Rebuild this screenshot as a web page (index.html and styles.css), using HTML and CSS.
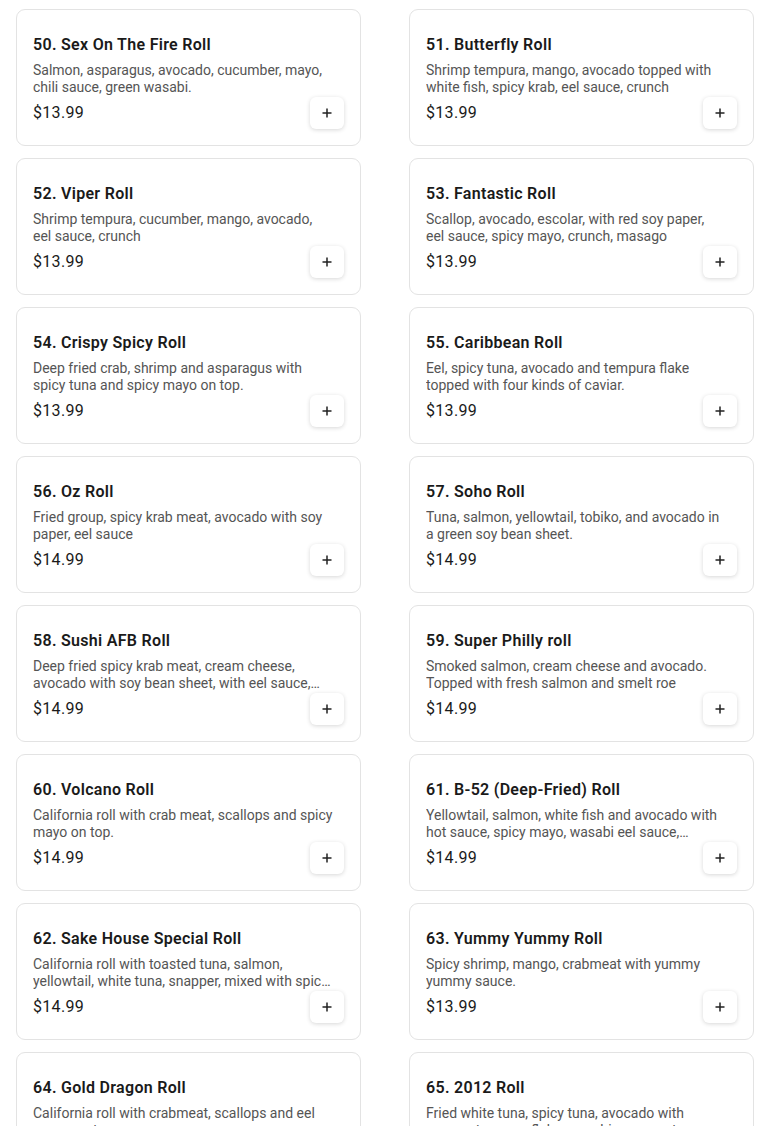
FILE: index.html
```html
<!DOCTYPE html>
<html>
<head>
<meta charset="utf-8">
<link rel="stylesheet" href="styles.css">
</head>
<body>
<div class="grid">
  <div class="card"><h3 class="title">50. Sex On The Fire Roll</h3><p class="desc">Salmon, asparagus, avocado, cucumber, mayo, chili sauce, green wasabi.</p><div class="row"><span class="price">$13.99</span><button class="add"><svg viewBox="0 0 12 12" width="12" height="12"><path d="M6 1.5v9M1.5 6h9" stroke="#222" stroke-width="1.5"/></svg></button></div></div>
  <div class="card"><h3 class="title">51. Butterfly Roll</h3><p class="desc">Shrimp tempura, mango, avocado topped with white fish, spicy krab, eel sauce, crunch</p><div class="row"><span class="price">$13.99</span><button class="add"><svg viewBox="0 0 12 12" width="12" height="12"><path d="M6 1.5v9M1.5 6h9" stroke="#222" stroke-width="1.5"/></svg></button></div></div>
  <div class="card"><h3 class="title">52. Viper Roll</h3><p class="desc">Shrimp tempura, cucumber, mango, avocado, eel sauce, crunch</p><div class="row"><span class="price">$13.99</span><button class="add"><svg viewBox="0 0 12 12" width="12" height="12"><path d="M6 1.5v9M1.5 6h9" stroke="#222" stroke-width="1.5"/></svg></button></div></div>
  <div class="card"><h3 class="title">53. Fantastic Roll</h3><p class="desc">Scallop, avocado, escolar, with red soy paper, eel sauce, spicy mayo, crunch, masago</p><div class="row"><span class="price">$13.99</span><button class="add"><svg viewBox="0 0 12 12" width="12" height="12"><path d="M6 1.5v9M1.5 6h9" stroke="#222" stroke-width="1.5"/></svg></button></div></div>
  <div class="card"><h3 class="title">54. Crispy Spicy Roll</h3><p class="desc">Deep fried crab, shrimp and asparagus with spicy tuna and spicy mayo on top.</p><div class="row"><span class="price">$13.99</span><button class="add"><svg viewBox="0 0 12 12" width="12" height="12"><path d="M6 1.5v9M1.5 6h9" stroke="#222" stroke-width="1.5"/></svg></button></div></div>
  <div class="card"><h3 class="title">55. Caribbean Roll</h3><p class="desc">Eel, spicy tuna, avocado and tempura flake topped with four kinds of caviar.</p><div class="row"><span class="price">$13.99</span><button class="add"><svg viewBox="0 0 12 12" width="12" height="12"><path d="M6 1.5v9M1.5 6h9" stroke="#222" stroke-width="1.5"/></svg></button></div></div>
  <div class="card"><h3 class="title">56. Oz Roll</h3><p class="desc">Fried group, spicy krab meat, avocado with soy paper, eel sauce</p><div class="row"><span class="price">$14.99</span><button class="add"><svg viewBox="0 0 12 12" width="12" height="12"><path d="M6 1.5v9M1.5 6h9" stroke="#222" stroke-width="1.5"/></svg></button></div></div>
  <div class="card"><h3 class="title">57. Soho Roll</h3><p class="desc">Tuna, salmon, yellowtail, tobiko, and avocado in a green soy bean sheet.</p><div class="row"><span class="price">$14.99</span><button class="add"><svg viewBox="0 0 12 12" width="12" height="12"><path d="M6 1.5v9M1.5 6h9" stroke="#222" stroke-width="1.5"/></svg></button></div></div>
  <div class="card"><h3 class="title">58. Sushi AFB Roll</h3><p class="desc">Deep fried spicy krab meat, cream cheese, avocado with soy bean sheet, with eel sauce, spicy mayo and crunch on top.</p><div class="row"><span class="price">$14.99</span><button class="add"><svg viewBox="0 0 12 12" width="12" height="12"><path d="M6 1.5v9M1.5 6h9" stroke="#222" stroke-width="1.5"/></svg></button></div></div>
  <div class="card"><h3 class="title">59. Super Philly roll</h3><p class="desc">Smoked salmon, cream cheese and avocado. Topped with fresh salmon and smelt roe</p><div class="row"><span class="price">$14.99</span><button class="add"><svg viewBox="0 0 12 12" width="12" height="12"><path d="M6 1.5v9M1.5 6h9" stroke="#222" stroke-width="1.5"/></svg></button></div></div>
  <div class="card"><h3 class="title">60. Volcano Roll</h3><p class="desc">California roll with crab meat, scallops and spicy mayo on top.</p><div class="row"><span class="price">$14.99</span><button class="add"><svg viewBox="0 0 12 12" width="12" height="12"><path d="M6 1.5v9M1.5 6h9" stroke="#222" stroke-width="1.5"/></svg></button></div></div>
  <div class="card"><h3 class="title">61. B-52 (Deep-Fried) Roll</h3><p class="desc">Yellowtail, salmon, white fish and avocado with hot sauce, spicy mayo, wasabi eel sauce, scallions and masago.</p><div class="row"><span class="price">$14.99</span><button class="add"><svg viewBox="0 0 12 12" width="12" height="12"><path d="M6 1.5v9M1.5 6h9" stroke="#222" stroke-width="1.5"/></svg></button></div></div>
  <div class="card"><h3 class="title">62. Sake House Special Roll</h3><p class="desc">California roll with toasted tuna, salmon, yellowtail, white tuna, snapper, mixed with spicy sauce on top.</p><div class="row"><span class="price">$14.99</span><button class="add"><svg viewBox="0 0 12 12" width="12" height="12"><path d="M6 1.5v9M1.5 6h9" stroke="#222" stroke-width="1.5"/></svg></button></div></div>
  <div class="card"><h3 class="title">63. Yummy Yummy Roll</h3><p class="desc">Spicy shrimp, mango, crabmeat with yummy yummy sauce.</p><div class="row"><span class="price">$13.99</span><button class="add"><svg viewBox="0 0 12 12" width="12" height="12"><path d="M6 1.5v9M1.5 6h9" stroke="#222" stroke-width="1.5"/></svg></button></div></div>
  <div class="card"><h3 class="title">64. Gold Dragon Roll</h3><p class="desc">California roll with crabmeat, scallops and eel sauce on top.</p><div class="row"><span class="price">$14.99</span><button class="add"><svg viewBox="0 0 12 12" width="12" height="12"><path d="M6 1.5v9M1.5 6h9" stroke="#222" stroke-width="1.5"/></svg></button></div></div>
  <div class="card"><h3 class="title">65. 2012 Roll</h3><p class="desc">Fried white tuna, spicy tuna, avocado with mango, tempura flake, wasabi mayo on top.</p><div class="row"><span class="price">$14.99</span><button class="add"><svg viewBox="0 0 12 12" width="12" height="12"><path d="M6 1.5v9M1.5 6h9" stroke="#222" stroke-width="1.5"/></svg></button></div></div>
</div>
</body>
</html>
```
FILE: styles.css
```css
html, body { margin: 0; padding: 0; background: #fff; }
body { font-family: Roboto, "Noto Sans", sans-serif; color: #1f1f1f; }
.grid {
  display: grid;
  grid-template-columns: 345px 345px;
  column-gap: 48px;
  row-gap: 12px;
  padding: 9px 16px;
}
.card {
  box-sizing: border-box;
  height: 137px;
  border: 1px solid #e3e3e3;
  border-radius: 9px;
  padding: 16px;
  display: flex;
  flex-direction: column;
  justify-content: flex-end;
}
.title {
  margin: 0;
  font-size: 16px;
  font-weight: 600;
  line-height: 20px;
  letter-spacing: 0.3px;
  color: #1a1a1a;
}
.desc {
  margin: 7px 11.5px 1px 0;
  font-size: 14px;
  line-height: 17px;
  color: #555;
  display: -webkit-box;
  -webkit-line-clamp: 2;
  -webkit-box-orient: vertical;
  overflow: hidden;
}
.row {
  display: flex;
  align-items: center;
  justify-content: space-between;
  height: 32px;
}
.price {
  font-size: 16px;
  line-height: 20px;
  letter-spacing: 0.3px;
  color: #1a1a1a;
  margin-top: -1px;
}
.add {
  width: 34px;
  height: 32px;
  border: none;
  border-radius: 6px;
  background: #fff;
  box-shadow: 0 1px 4px rgba(0,0,0,0.16);
  display: flex;
  align-items: center;
  justify-content: center;
  padding: 0;
}
.add svg { display: block; }
```
